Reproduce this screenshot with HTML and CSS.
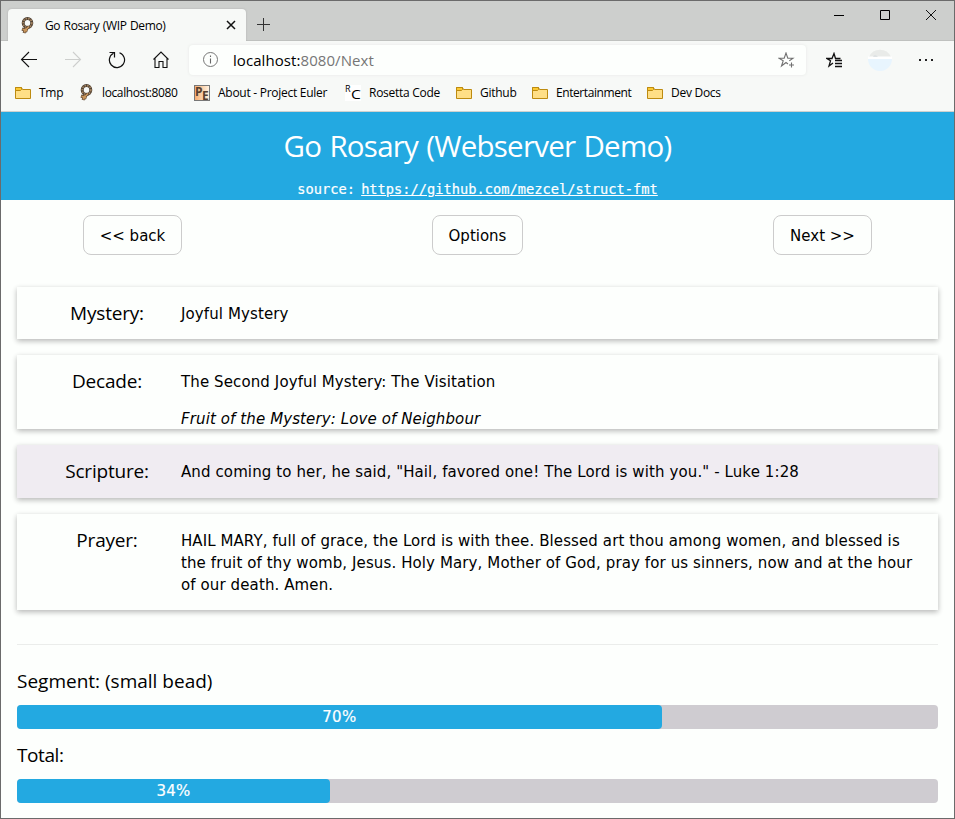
FILE: index.html
```html
<!DOCTYPE html>
<html lang="en">
<head>
<meta charset="utf-8">
<title>Go Rosary (WIP Demo)</title>
<link rel="stylesheet" href="styles.css">
</head>
<body>
<svg class="defs" width="0" height="0">
  <symbol id="folder" viewBox="0 0 16 16">
    <path d="M.5 2.5h6l1 2h8v9H.5z" fill="#ffdf86" stroke="#bd8b10"/>
    <path d="M.5 2.5h6v2l-1 1h-5z" fill="#fbc934" stroke="#bd8b10"/>
  </symbol>
  <symbol id="rosary" viewBox="0 0 16 17">
    <ellipse cx="7.500" cy="6" rx="4.300" ry="4.500" fill="none" stroke="#4d4033" stroke-width="3"/>
    <ellipse cx="7.500" cy="6" rx="4.300" ry="4.500" fill="none" stroke="#a58460" stroke-width="1.700" stroke-dasharray="1.600 1"/>
    <path d="M9 9.500l-3 3M2 12l5.500 2M4 16l2-5" stroke="#5c4632" stroke-width="3"/>
    <path d="M9 9.500l-3 3M2.500 12.200l4.600 1.700M4.300 15.500l1.500-4" stroke="#c8955b" stroke-width="1.700"/>
  </symbol>
</svg>
<div class="window">
  <div class="titlebar">
    <div class="tab">
      <svg class="favicon" width="16" height="17"><use href="#rosary"/></svg>
      <span class="tab-title">Go Rosary (WIP Demo)</span>
      <svg class="tab-close" width="10" height="10" viewBox="0 0 10 10"><path d="M1 1l8 8M9 1l-8 8" stroke="#111" stroke-width="1.5"/></svg>
    </div>
    <svg class="new-tab" width="14" height="14" viewBox="0 0 14 14"><path d="M7.500 1v13M1 7.500h13" stroke="#333"/></svg>
    <div class="controls">
      <svg width="12" height="12" viewBox="0 0 12 12"><path d="M1 6.500h10" stroke="#000"/></svg>
      <svg width="12" height="12" viewBox="0 0 12 12"><path d="M1.500 1.500h9v9h-9z" fill="none" stroke="#000"/></svg>
      <svg width="12" height="12" viewBox="0 0 12 12"><path d="M1 1l10 10M11 1L1 11" stroke="#111"/></svg>
    </div>
  </div>
  <div class="toolbar">
    <div class="nav">
      <svg width="18" height="18" viewBox="0 0 18 18"><path d="M17 8.500H1.500M9 1L1.500 8.500 9 16" fill="none" stroke="#111" stroke-width="1.100"/></svg>
      <svg width="18" height="18" viewBox="0 0 18 18"><path d="M1 8.500h15.500M9 1l7.500 7.500L9 16" fill="none" stroke="#cdcfcd" stroke-width="1.100"/></svg>
      <svg width="18" height="18" viewBox="0 0 18 18"><path d="M11.500 1.800A7.600 7.600 0 1 1 5.500 2.200M1.500 1.500h5v5" fill="none" stroke="#111" stroke-width="1.200"/></svg>
      <svg width="18" height="18" viewBox="0 0 18 18"><path d="M3 7.500v9h4v-6h4v6h4v-9M1.500 8.500L9 1l7.500 7.500" fill="none" stroke="#111" stroke-width="1.100"/></svg>
    </div>
    <div class="address">
      <svg width="16" height="16" viewBox="0 0 16 16"><circle cx="7.500" cy="7.500" r="7" fill="none" stroke="#777"/><path d="M7.500 6.500v5M7.500 3.500V5" stroke="#666" stroke-width="1.100"/></svg>
      <span class="url">localhost:<span class="path">8080/Next</span></span>
      <svg class="add-star" width="17" height="17" viewBox="0 0 17 17"><path d="M10 12l-2-1.500L3.500 14l1.700-5.300L1 6.200h5.200L8 1l1.800 5.200H15l-3.700 2.700M13.500 10.500v5M11 13h5" fill="none" stroke="#707070" stroke-width="1.100"/></svg>
    </div>
    <svg class="favorites" width="17" height="17" viewBox="0 0 17 17"><path d="M7 11l-4 3 1.500-5.300L1 6.500h5L8 1.500l1.500 5h5M9 8.500h7M9 11.500h7M9 14.500h7" fill="none" stroke="#111" stroke-width="1.300"/></svg>
    <svg class="avatar" width="24" height="24" viewBox="0 0 24 24"><path d="M1 9a12 12 0 0 1 22 0z" fill="#e9ebe9"/><path d="M0 11a12 12 0 0 0 24 0z" fill="#e8f5fe"/><path d="M0 8.500h24v2.500H0z" fill="#fff"/><path d="M5 9q1-3 3-2l2 2z" fill="#dfe3e4"/></svg>
    <svg class="more" width="16" height="4" viewBox="0 0 16 4"><path d="M1 1h2v2H1zM7 1h2v2H7zM13 1h2v2h-2z" fill="#222"/></svg>
  </div>
  <div class="bookmarks">
    <div class="bookmark"><svg width="16" height="16"><use href="#folder"/></svg><span>Tmp</span></div>
    <div class="bookmark host"><svg width="16" height="17"><use href="#rosary"/></svg><span>localhost:8080</span></div>
    <div class="bookmark"><span class="pe"><b>P</b><b class="low">E</b></span><span>About - Project Euler</span></div>
    <div class="bookmark"><span class="rc"><i>R</i><i class="low">C</i></span><span>Rosetta Code</span></div>
    <div class="bookmark"><svg width="16" height="16"><use href="#folder"/></svg><span>Github</span></div>
    <div class="bookmark"><svg width="16" height="16"><use href="#folder"/></svg><span class="entertainment">Entertainment</span></div>
    <div class="bookmark"><svg width="16" height="16"><use href="#folder"/></svg><span>Dev Docs</span></div>
  </div>
  <header class="banner">
    <h1>Go Rosary (Webserver Demo)</h1>
    <p>source: <a href="#">https://github.com/mezcel/struct-fmt</a></p>
  </header>
  <nav class="actions">
    <button class="side">&lt;&lt; back</button>
    <button class="mid">Options</button>
    <button class="side">Next &gt;&gt;</button>
  </nav>
  <main>
    <section class="card mystery"><h2>Mystery:</h2><div class="text">Joyful Mystery</div></section>
    <section class="card decade"><h2>Decade:</h2><div class="text"><p>The Second Joyful Mystery: The Visitation</p><p><em>Fruit of the Mystery: Love of Neighbour</em></p></div></section>
    <section class="card scripture"><h2>Scripture:</h2><div class="text">And coming to her, he said, "Hail, favored one! The Lord is with you." - Luke 1:28</div></section>
    <section class="card prayer"><h2>Prayer:</h2><div class="text"><span class="caps">HAIL MARY</span>, full of grace, the Lord is with thee. Blessed art thou among women, and blessed is<br>the fruit of thy womb, Jesus. Holy Mary, Mother of God, pray for us sinners, now and at the hour<br>of our death. Amen.</div></section>
    <hr>
    <h3>Segment: (small bead)</h3>
    <div class="progress"><div class="bar" style="width:70%">70%</div></div>
    <h3 class="total">Total:</h3>
    <div class="progress"><div class="bar" style="width:34%">34%</div></div>
  </main>
</div>
</body>
</html>
```
FILE: styles.css
```css
* { box-sizing: border-box; }
body { margin: 0; background: #fdfffd; color: #000; font-family: "Open Sans", "Noto Sans", sans-serif; }
.defs { position: absolute; }
svg { display: block; flex: none; }
h1, h2, h3, p { margin: 0; font-weight: 400; }
.window { width: 955px; height: 819px; border: 1px solid #6b6b6b; overflow: hidden; white-space: nowrap; }

.titlebar { display: flex; height: 40px; background: #cdcfcd; box-shadow: inset 0 -1px #bfc1bf; }
.tab { display: flex; align-items: center; width: 238px; height: 32px; margin: 8px 0 0 7px; padding: 0 10px 0 12px; background: #f7f9f7; border-radius: 4px 4px 0 0; box-shadow: 0 0 2px #aaa; clip-path: inset(-3px -3px 0 -3px); }
.tab-title { margin-left: 9px; font-size: 12px; letter-spacing: -.35px; word-spacing: .6px; }
.tab-close { margin-left: auto; }
.new-tab { margin: 16px 0 0 10px; }
.controls { display: flex; gap: 34px; margin: 8px 17px 0 auto; }
.toolbar { display: flex; align-items: center; height: 38px; padding-left: 19px; background: #f7f9f7; }
.nav { display: flex; gap: 26px; }
.address { display: flex; align-items: center; width: 617px; height: 30px; margin-left: 19px; padding: 0 11px 0 14px; background: #fdfffd; border-radius: 4px; box-shadow: 0 0 3px #e4e6e4; }
.url { margin-left: 14px; font-size: 15px; letter-spacing: .07px; }
.path { color: #767676; }
.add-star { margin-left: auto; }
.favorites { margin-left: 20px; }
.avatar { margin-left: 25px; }
.more { margin-left: 26px; }
.bookmarks { display: grid; grid-template-columns: 64px 115px 151px 111px 76px 115px 1fr; align-items: center; height: 33px; padding: 0 0 5px 14px; background: #f7f9f7; border-bottom: 1px solid #cfd1cf; }
.bookmark { display: flex; align-items: center; gap: 8px; font-size: 12px; letter-spacing: -.27px; }
.host { gap: 7px; letter-spacing: -.38px; }
.entertainment { letter-spacing: -.42px; }
.pe, .rc { display: flex; width: 16px; height: 16px; line-height: 9px; letter-spacing: 0; }
.pe { border: 1px solid #777; background: linear-gradient(90deg, #f7ae72, #fff1df); color: #57402e; font-size: 12px; padding-top: 1px; }
.pe b { width: 7px; }
.rc { background: #fff; font-size: 9px; }
.rc i { font-style: normal; width: 6px; line-height: 8px; }
.rc .low { padding-top: 6px; font-size: 12px; transform: scaleX(1.3); transform-origin: left; }
.low { padding-top: 4px; }

.banner { height: 88px; background: #23a9e1; color: #fff; text-align: center; }
.banner h1 { padding-top: 14px; font-size: 29.5px; line-height: 40px; letter-spacing: -.75px; word-spacing: 1.2px; }
.banner p { margin-top: 13px; font: 13.7px/20px "DejaVu Sans Mono", monospace; word-spacing: -2px; -webkit-text-stroke: .2px #fff; }
.banner a { color: inherit; }
.actions { display: flex; justify-content: space-between; padding: 15px 82px 0; }
button { height: 40px; padding: 2px 0 0; border: 1px solid #ccc; border-radius: 8px; background: #fdfffd; color: #000; font: 15px "DejaVu Sans", sans-serif; }
.side { width: 99px; }
.mid { width: 91px; }
main { padding: 32px 16px 0; }
.card { display: grid; grid-template-columns: 180px 1fr; margin-bottom: 16px; padding-top: 14px; background: #fdfffd; box-shadow: 0 2px 5px rgba(0,0,0,.16), 0 2px 6px rgba(0,0,0,.14); }
.card h2 { font-size: 19px; line-height: 24px; text-align: center; letter-spacing: -.2px; }
.text { margin-left: -16px; font: 15px/22px "DejaVu Sans", sans-serif; letter-spacing: .11px; padding-top: 2px; }
.text p + p { margin-top: 15px; }
.mystery { height: 52px; }
.decade { height: 74px; }
.scripture { height: 53px; background: #f0ecf2; }
.prayer { height: 96px; }
.caps { letter-spacing: .08px; }
hr { height: 1px; margin: 34px 0 22px; border: 0; background: #ebedeb; }
h3 { height: 38px; font-size: 19px; line-height: 28px; }
.total { letter-spacing: -.4px; }
.progress { height: 24px; margin-bottom: 12px; border-radius: 4px; background: #cfccd1; }
.bar { height: 24px; border-radius: 4px; background: #23a9e1; color: #fff; font: 15px/24px "DejaVu Sans", sans-serif; letter-spacing: .3px; -webkit-text-stroke: .2px #fff; text-align: center; }
```
